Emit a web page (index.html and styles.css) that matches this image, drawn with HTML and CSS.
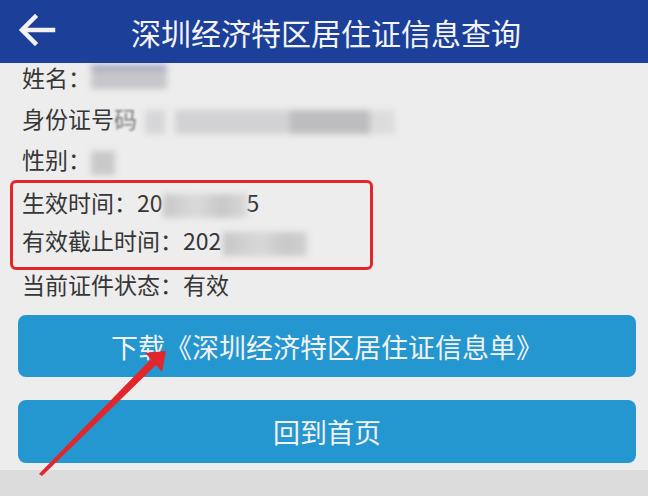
FILE: index.html
```html
<!DOCTYPE html>
<html lang="zh">
<head>
<meta charset="utf-8">
<link rel="stylesheet" href="styles.css">
</head>
<body>
<div class="page">
  <header class="topbar">
    <svg class="back" width="40" height="34" viewBox="0 0 40 34">
      <path d="M37 17 H7 M19 4 L6 17 L19 30" fill="none" stroke="#f2f2f2" stroke-width="4.5" stroke-linecap="square"/>
    </svg>
    <h1 class="title">深圳经济特区居住证信息查询</h1>
  </header>
  <main class="content">
    <div class="row first">姓名：<span class="blur b-name"></span></div>
    <div class="row">身份证号<span class="fade">码</span><span class="blur b-id"></span></div>
    <div class="row">性别：<span class="blur b-sex"></span></div>
    <div class="mark">
      <div class="row">生效时间：20<span class="blur b-date"></span>5</div>
      <div class="row">有效截止时间：202<span class="blur b-date2"></span></div>
    </div>
    <div class="row last">当前证件状态：有效</div>
    <button class="btn">下载《深圳经济特区居住证信息单》</button>
    <button class="btn second">回到首页</button>
  </main>
  <div class="strip"></div>
  <svg class="pointer" width="648" height="496" viewBox="0 0 648 496">
    <polygon points="39,474 151,359 145,353 166,351 162,372 156,365 42,476" fill="#e2262b"/>
  </svg>
</div>
</body>
</html>
```
FILE: styles.css
```css
* { box-sizing: border-box; }
html, body { margin: 0; padding: 0; }
body {
  background: #ededed;
  font-family: "Noto Sans CJK SC", "Noto Sans", sans-serif;
  color: #363636;
}
.page {
  position: relative;
  width: 648px;
  height: 496px;
  overflow: hidden;
  display: flex;
  flex-direction: column;
}
.topbar {
  height: 63px;
  flex: none;
  background: #1c3f99;
  display: flex;
  align-items: center;
  position: relative;
  z-index: 1;
}
.back { position: absolute; left: 16px; top: 13px; }
.title {
  flex: 1;
  margin: 0;
  text-align: center;
  color: #f4f4f4;
  font-size: 30px;
  font-weight: 400;
  padding-left: 4px;
}
.content {
  flex: 1;
  padding: 0 12px 0 18px;
  display: flex;
  flex-direction: column;
}
.row {
  height: 41px;
  line-height: 41px;
  font-size: 23px;
  padding-left: 4px;
  white-space: nowrap;
}
.row.first { margin-top: -6px; }
.row.last { height: 28px; line-height: 28px; }
.mark {
  margin: 0 0 0 -8px;
  width: 363px;
  border: 3px solid #e3262a;
  border-radius: 6px;
  padding: 0 0 8px 9px;
}
.mark .row { height: 38px; line-height: 38px; padding-left: 0; }
.blur {
  display: inline-block;
  vertical-align: middle;
  filter: blur(3px);
  height: 24px;
}
.fade { color: #777; filter: blur(1.2px); }
.b-name { width: 76px; margin-top: -8px; background: linear-gradient(#9ea3bd 0 20%, #c6c6ca 20%); }
.b-id { width: 250px; margin-left: 8px; background: linear-gradient(90deg, #d6d6d8 0 8%, #ececec 8% 12%, #d2d2d5 12% 58%, #bdbdc0 58% 90%, #dcdcdc 90%); }
.b-sex { width: 24px; background: #c9c9c9; }
.b-date { width: 84px; background: linear-gradient(90deg, #c8c8c8, #dadada 40%, #c8c8c8 70%, #d8d8d8); }
.b-date2 { width: 84px; margin-left: 2px; background: linear-gradient(90deg, #c6c6c6, #d8d8d8 45%, #c8c8c8 75%, #d0d0d0); }
.btn {
  display: block;
  width: 100%;
  height: 62px;
  margin-top: 17px;
  border: none;
  border-radius: 8px;
  background: #2496d0;
  color: #f2f2f2;
  font-family: inherit;
  font-size: 27px;
  padding: 0;
}
.btn.second { margin-top: 23px; height: 63px; }
.strip {
  height: 26px;
  flex: none;
  background: #dcdcdc;
}
.pointer { position: absolute; left: 0; top: 0; pointer-events: none; }
```
